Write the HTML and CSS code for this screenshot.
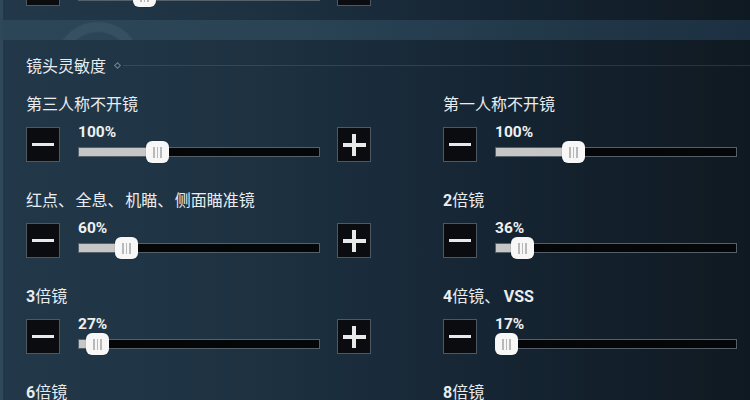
FILE: index.html
```html
<!DOCTYPE html>
<html lang="zh-CN">
<head>
<meta charset="utf-8">
<title>镜头灵敏度</title>
<link rel="stylesheet" href="styles.css">
</head>
<body>
<div class="screen">
  <div class="panel panel-prev">
    <div class="settings settings-prev">
      <div class="setting">
        <div class="controls">
          <div class="btn minus"></div>
          <div class="slider">
            <div class="pct">&nbsp;</div>
            <div class="track">
              <div class="fill" style="width:66px"></div>
              <div class="thumb" style="left:55px"><i></i><i></i><i></i></div>
            </div>
          </div>
          <div class="btn plus"></div>
        </div>
      </div>
    </div>
  </div>
  <div class="band"></div>
  <div class="panel panel-main">
    <div class="panel-head">
      <span class="title">镜头灵敏度</span>
      <span class="diamond"></span>
      <span class="rule"></span>
    </div>
    <div class="settings">
      <div class="setting">
        <div class="label">第三人称不开镜</div>
        <div class="controls">
          <div class="btn minus"></div>
          <div class="slider">
            <div class="pct">100%</div>
            <div class="track">
              <div class="fill" style="width:79px"></div>
              <div class="thumb" style="left:68px"><i></i><i></i><i></i></div>
            </div>
          </div>
          <div class="btn plus"></div>
        </div>
      </div>
      <div class="setting">
        <div class="label">第一人称不开镜</div>
        <div class="controls">
          <div class="btn minus"></div>
          <div class="slider">
            <div class="pct">100%</div>
            <div class="track">
              <div class="fill" style="width:78px"></div>
              <div class="thumb" style="left:67px"><i></i><i></i><i></i></div>
            </div>
          </div>
          <div class="btn plus"></div>
        </div>
      </div>
      <div class="setting">
        <div class="label label-tight">红点、 全息、 机瞄、 侧面瞄准镜</div>
        <div class="controls">
          <div class="btn minus"></div>
          <div class="slider">
            <div class="pct">60%</div>
            <div class="track">
              <div class="fill" style="width:48px"></div>
              <div class="thumb" style="left:37px"><i></i><i></i><i></i></div>
            </div>
          </div>
          <div class="btn plus"></div>
        </div>
      </div>
      <div class="setting">
        <div class="label"><b class="lat">2</b>倍镜</div>
        <div class="controls">
          <div class="btn minus"></div>
          <div class="slider">
            <div class="pct">36%</div>
            <div class="track">
              <div class="fill" style="width:27px"></div>
              <div class="thumb" style="left:16px"><i></i><i></i><i></i></div>
            </div>
          </div>
          <div class="btn plus"></div>
        </div>
      </div>
      <div class="setting">
        <div class="label"><b class="lat">3</b>倍镜</div>
        <div class="controls">
          <div class="btn minus"></div>
          <div class="slider">
            <div class="pct">27%</div>
            <div class="track">
              <div class="fill" style="width:19px"></div>
              <div class="thumb" style="left:8px"><i></i><i></i><i></i></div>
            </div>
          </div>
          <div class="btn plus"></div>
        </div>
      </div>
      <div class="setting">
        <div class="label"><b class="lat">4</b>倍镜、 <b class="lat">VSS</b></div>
        <div class="controls">
          <div class="btn minus"></div>
          <div class="slider">
            <div class="pct">17%</div>
            <div class="track">
              <div class="fill" style="width:11px"></div>
              <div class="thumb" style="left:0px"><i></i><i></i><i></i></div>
            </div>
          </div>
          <div class="btn plus"></div>
        </div>
      </div>
      <div class="setting">
        <div class="label"><b class="lat">6</b>倍镜</div>
      </div>
      <div class="setting">
        <div class="label"><b class="lat">8</b>倍镜</div>
      </div>
    </div>
  </div>
</div>
</body>
</html>
```
FILE: styles.css
```css
* { box-sizing: border-box; }

html, body {
  margin: 0;
  padding: 0;
  width: 750px;
  height: 400px;
  overflow: hidden;
}

body {
  font-family: "Noto Sans CJK SC", "Noto Sans", sans-serif;
  color: #e9edf0;
  background: linear-gradient(90deg, #2e485a 0%, #28414f 40%, #1f3545 70%, #1a2d3c 100%);
}

.screen {
  display: flex;
  flex-direction: column;
  width: 750px;
  height: 400px;
  padding-left: 3px;
}

.panel {
  background: linear-gradient(90deg, #223848 0%, #1d3141 35%, #172736 60%, #121e29 85%, #0f1921 100%);
  overflow: hidden;
}

.panel-prev {
  height: 20px;
  flex: none;
  padding-left: 23px;
}

.settings-prev {
  margin-top: -29px;
}

.band {
  height: 20px;
  flex: none;
  background:
    radial-gradient(circle at 95px 45px, rgba(0,0,0,0) 32px, rgba(150,175,190,0.10) 34px, rgba(150,175,190,0.10) 42px, rgba(0,0,0,0) 44px),
    linear-gradient(90deg, #2c4658 0%, #2a4455 40%, #22394a 70%, #1c3041 100%);
}

.panel-main {
  flex: 1;
  padding-left: 23px;
  padding-top: 15px;
}

.panel-head {
  display: flex;
  align-items: center;
  height: 20px;
  margin-bottom: 16px;
}

.title {
  font-size: 16px;
  line-height: 20px;
  white-space: nowrap;
}

.diamond {
  width: 5px;
  height: 5px;
  margin-left: 9px;
  border: 1px solid #6f8595;
  transform: rotate(45deg);
  flex: none;
}

.rule {
  flex: 1;
  height: 1px;
  margin-left: 3px;
  background: rgba(120, 150, 170, 0.22);
}

.settings {
  display: grid;
  grid-template-columns: 417px 417px;
  row-gap: 25px;
}

.label {
  font-size: 16px;
  line-height: 24px;
  height: 24px;
  margin-bottom: 12px;
  white-space: nowrap;
}

.label-tight {
  word-spacing: -2px;
}

.lat {
  font-family: Roboto, "Liberation Sans", sans-serif;
  font-weight: 700;
}

.controls {
  display: flex;
  align-items: flex-start;
  height: 35px;
}

.btn {
  position: relative;
  width: 34px;
  height: 35px;
  flex: none;
  background: #0b0c0f;
  border: 1px solid #4d5863;
  display: flex;
  align-items: center;
  justify-content: center;
}

.btn::before {
  content: "";
  width: 22px;
  height: 3px;
  background: #e9e9e9;
}

.plus::after {
  content: "";
  position: absolute;
  width: 4px;
  height: 22px;
  background: #e9e9e9;
}

.plus::before {
  width: 23px;
  height: 4px;
}

.slider {
  width: 242px;
  flex: none;
  margin: 0 17px 0 18px;
}

.pct {
  font-family: Roboto, "Liberation Sans", sans-serif;
  font-weight: 700;
  font-size: 15.5px;
  line-height: 14px;
  height: 14px;
  margin-top: -2px;
  color: #eef1f3;
}

.track {
  position: relative;
  height: 10px;
  margin-top: 8px;
  background: #050608;
  border: 1px solid #56606a;
}

.fill {
  height: 100%;
  background: #c6c6c6;
}

.thumb {
  position: absolute;
  top: -7px;
  width: 23px;
  height: 22px;
  margin-left: -1px;
  background: #f7f7f7;
  border-radius: 6px;
  display: flex;
  align-items: center;
  justify-content: center;
  gap: 2px;
  box-shadow: 0 0 1px rgba(0,0,0,0.5);
}

.thumb i {
  display: block;
  width: 1.5px;
  height: 11px;
  background: #b9b9b9;
}
```
